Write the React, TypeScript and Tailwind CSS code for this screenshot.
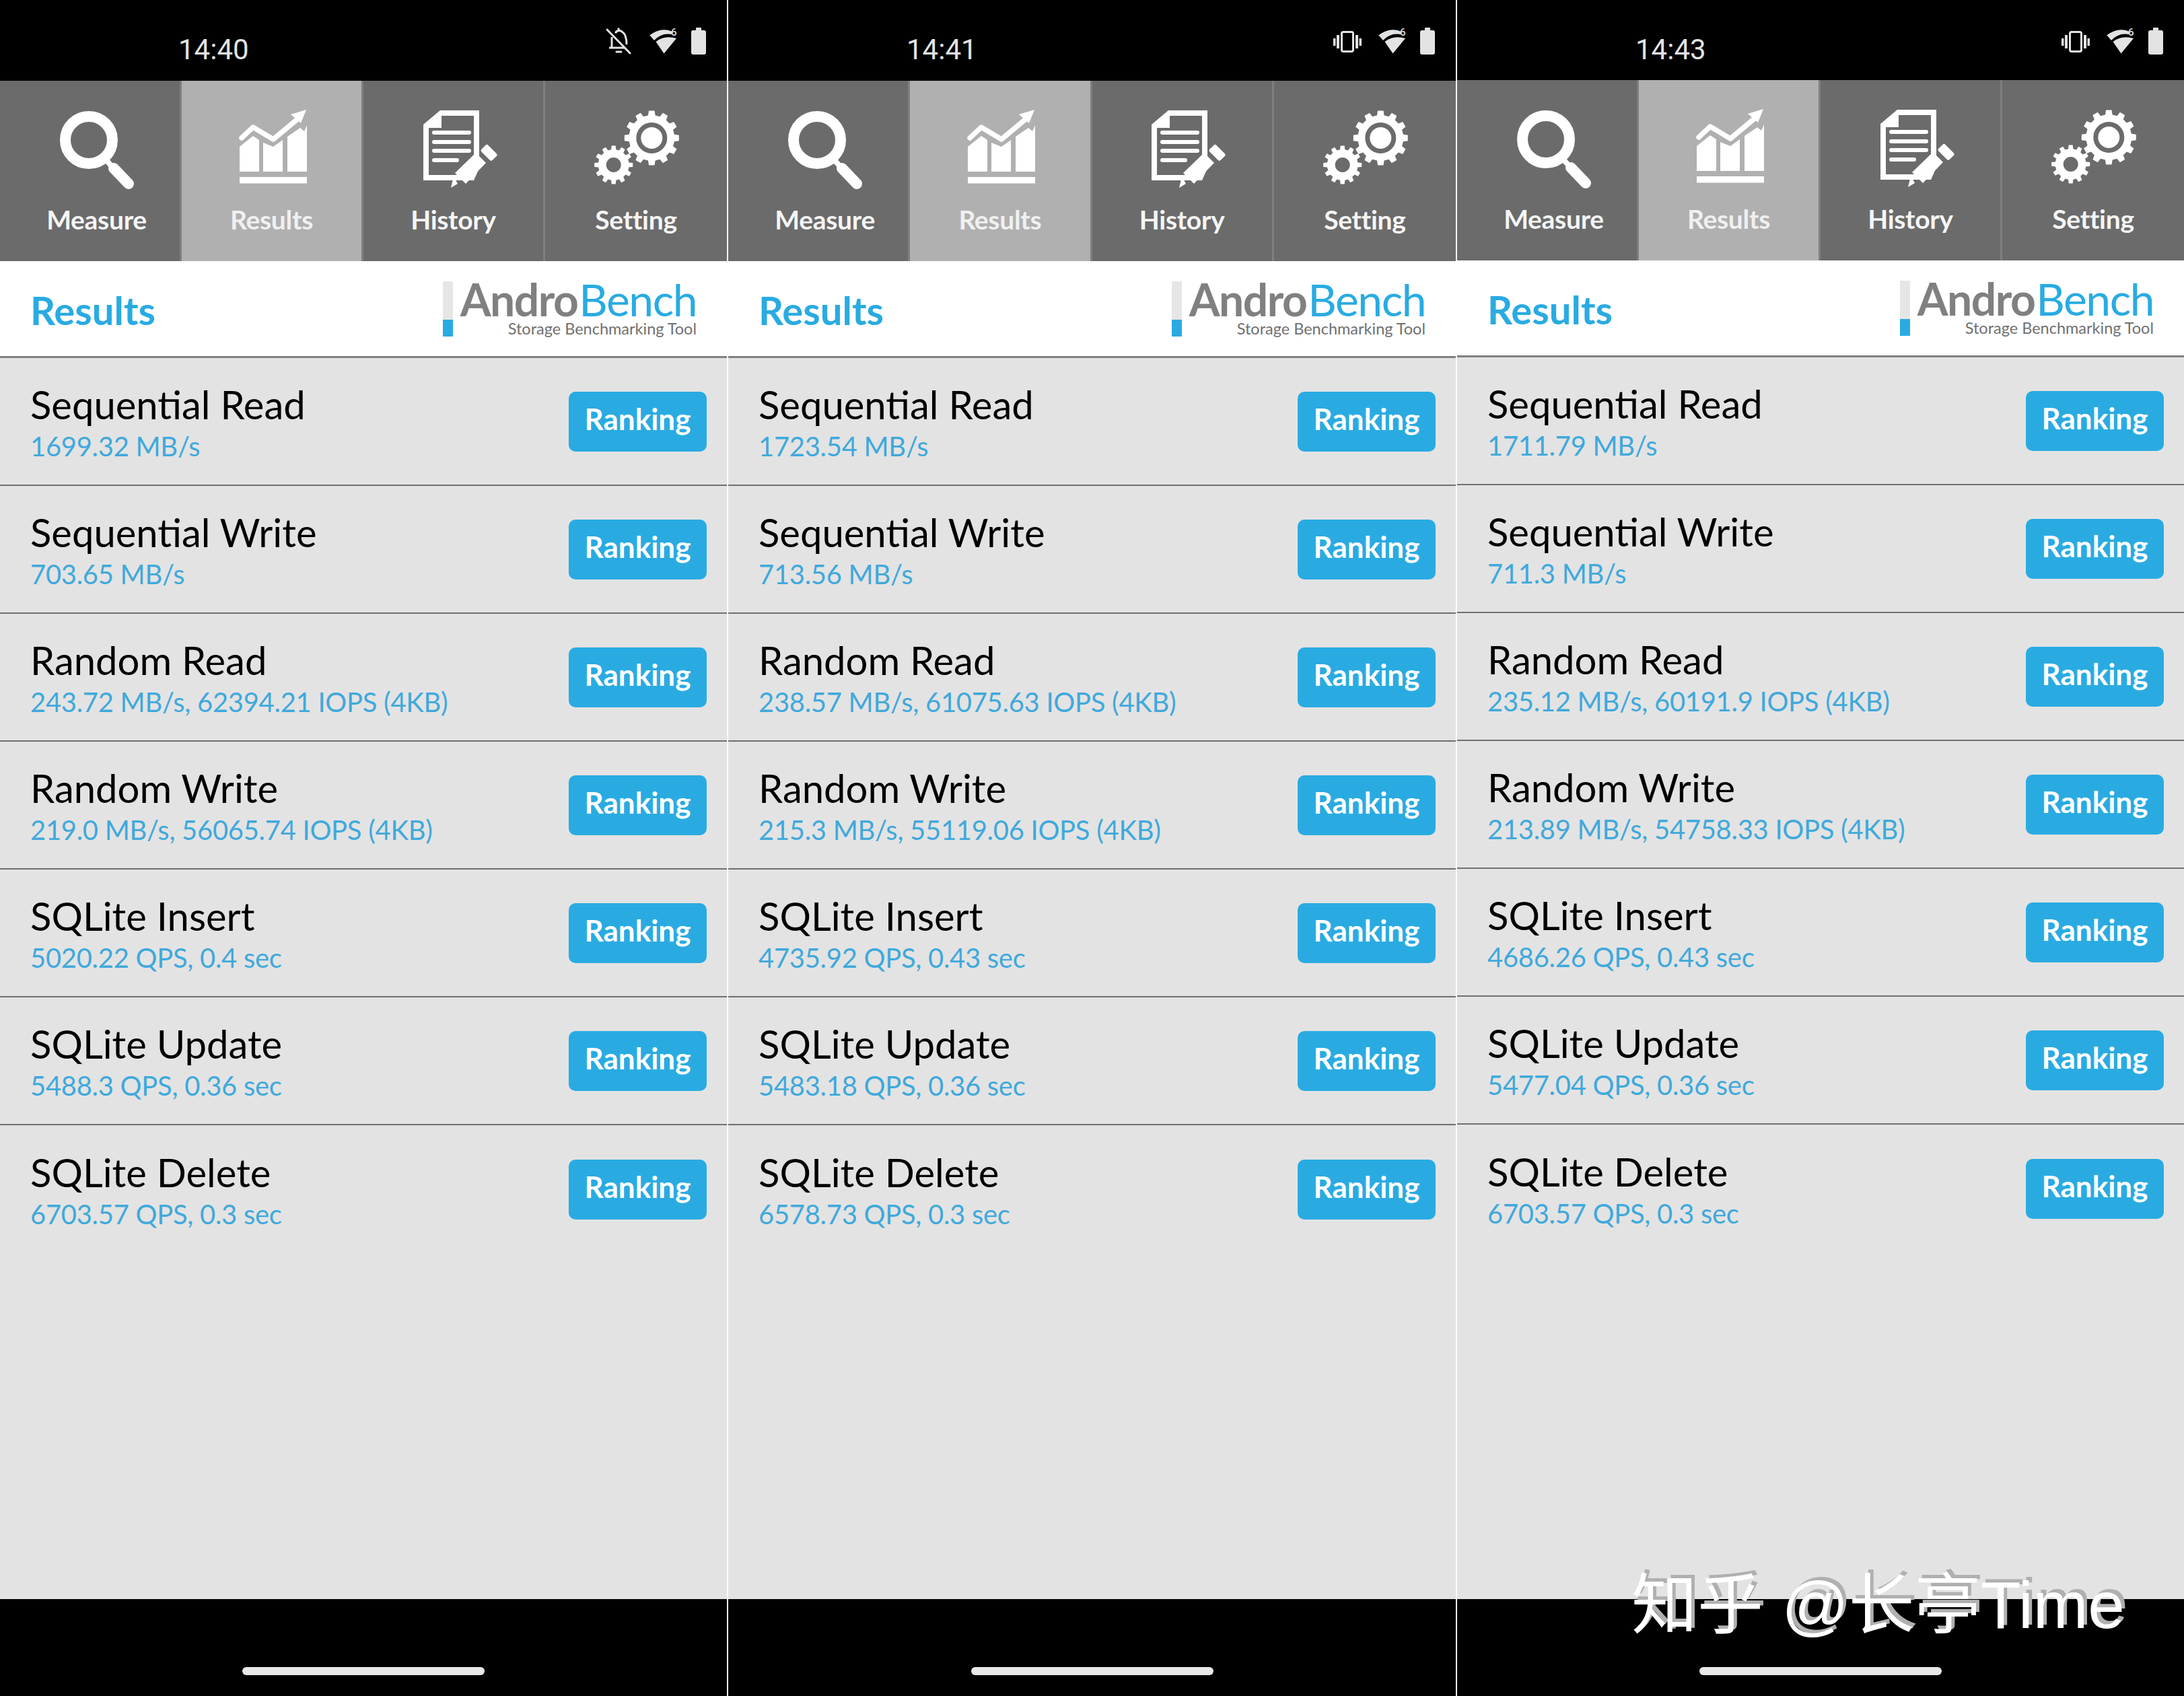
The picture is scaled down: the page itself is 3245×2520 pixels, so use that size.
import React from 'react';

type Row = { name: string; value: string };

type PanelData = {
  time: string;
  silent: boolean;
  values: string[];
};

const rowNames = [
  'Sequential Read',
  'Sequential Write',
  'Random Read',
  'Random Write',
  'SQLite Insert',
  'SQLite Update',
  'SQLite Delete',
];

const panels: PanelData[] = [
  {
    time: '14:40',
    silent: true,
    values: [
      '1699.32 MB/s',
      '703.65 MB/s',
      '243.72 MB/s, 62394.21 IOPS (4KB)',
      '219.0 MB/s, 56065.74 IOPS (4KB)',
      '5020.22 QPS, 0.4 sec',
      '5488.3 QPS, 0.36 sec',
      '6703.57 QPS, 0.3 sec',
    ],
  },
  {
    time: '14:41',
    silent: false,
    values: [
      '1723.54 MB/s',
      '713.56 MB/s',
      '238.57 MB/s, 61075.63 IOPS (4KB)',
      '215.3 MB/s, 55119.06 IOPS (4KB)',
      '4735.92 QPS, 0.43 sec',
      '5483.18 QPS, 0.36 sec',
      '6578.73 QPS, 0.3 sec',
    ],
  },
  {
    time: '14:43',
    silent: false,
    values: [
      '1711.79 MB/s',
      '711.3 MB/s',
      '235.12 MB/s, 60191.9 IOPS (4KB)',
      '213.89 MB/s, 54758.33 IOPS (4KB)',
      '4686.26 QPS, 0.43 sec',
      '5477.04 QPS, 0.36 sec',
      '6703.57 QPS, 0.3 sec',
    ],
  },
];

function gearPath(cx: number, cy: number, rOut: number, rIn: number, teeth: number) {
  const pts: string[] = [];
  const step = (Math.PI * 2) / teeth;
  for (let i = 0; i < teeth; i++) {
    const a = i * step;
    const corners: [number, number][] = [
      [a - step * 0.3, rIn],
      [a - step * 0.2, rOut],
      [a + step * 0.2, rOut],
      [a + step * 0.3, rIn],
    ];
    corners.forEach(([t, r]) => {
      pts.push(`${(cx + r * Math.cos(t)).toFixed(2)} ${(cy + r * Math.sin(t)).toFixed(2)}`);
    });
  }
  return `M${pts.join('L')}Z`;
}

function MeasureIcon() {
  return (
    <svg viewBox="0 0 180 124" className="w-[180px] h-[124px]">
      <circle cx="88" cy="48" r="35" fill="none" stroke="#fff" strokeWidth="16" />
      <path d="M112 76 L122 87" stroke="#fff" strokeWidth="8" />
      <path d="M125 90 L147 113" stroke="#fff" strokeWidth="16" strokeLinecap="round" />
    </svg>
  );
}

function ResultsIcon() {
  return (
    <svg viewBox="0 0 180 124" className="w-[180px] h-[124px]" fill="#fff">
      <rect x="42" y="103" width="100" height="9.5" />
      <path d="M42 58 L62 42 L71 48 V95 H42 Z" />
      <path d="M77 52 L92 58 L106 48 V95 H77 Z" />
      <path d="M113 43 L132 30 L138 35 L142 26 V95 H113 Z" />
      <path d="M45 45 L62 29 L92 47 L128 17" fill="none" stroke="#fff" strokeWidth="7.5" strokeLinecap="round" strokeLinejoin="round" />
      <path d="M141 3 L118 10 L133 23 Z" />
    </svg>
  );
}

function HistoryIcon() {
  return (
    <svg viewBox="0 0 180 124" className="w-[180px] h-[124px]" fill="#fff">
      <path
        fillRule="evenodd"
        d="M45 25 L70 4 H128 V90 L120 108 H45 Z M72 12 H120 V78 L95 100 H53 V30 H72 Z"
      />
      <rect x="58" y="34" width="58" height="6" rx="3" />
      <rect x="58" y="48" width="58" height="6" rx="3" />
      <rect x="58" y="61" width="58" height="6" rx="3" />
      <rect x="58" y="75" width="40" height="6" rx="3" />
      <path d="M92 97 L123 67 L138 82 L108 113 Z" />
      <path d="M86 119 L90 102 L96 113 Z" />
      <rect x="131" y="60" width="23" height="14" rx="3" transform="rotate(45 142.7 67)" />
    </svg>
  );
}

function SettingIcon() {
  return (
    <svg viewBox="0 0 180 124" className="w-[180px] h-[124px]">
      <path d={gearPath(113.3, 45, 40.7, 34, 12)} fill="#fff" />
      <circle cx="113.3" cy="45" r="19.5" fill="none" stroke="#6b6b6b" strokeWidth="7" />
      <path fillRule="evenodd" d={`${gearPath(56.7, 85, 28.7, 23, 12)} M67.7 85 A11 11 0 1 0 45.7 85 A11 11 0 1 0 67.7 85 Z`} fill="#fff" />
    </svg>
  );
}

function BellOffIcon() {
  return (
    <svg viewBox="0 0 42 42" className="w-[42px] h-[42px]" fill="none" stroke="#e3e3e3" strokeWidth="3">
      <path d="M4 4 L38 39" strokeLinecap="round" />
      <path d="M16 9 Q21 3 26 7 Q33 11 33 26" />
      <path d="M11 15 V30 M7 31 H30" />
      <path d="M18 37 H25" strokeLinecap="round" />
      <path d="M21 1.5 V5" />
    </svg>
  );
}

function VibrateIcon() {
  return (
    <svg viewBox="0 0 42 42" className="w-[42px] h-[42px]" fill="#e3e3e3">
      <rect x="12.5" y="7.5" width="17" height="29" rx="2.5" fill="none" stroke="#e3e3e3" strokeWidth="3" />
      <rect x="5" y="12" width="4" height="20" />
      <rect x="0" y="17" width="3.5" height="11" />
      <rect x="33" y="12" width="4" height="20" />
      <rect x="38.5" y="17" width="3.5" height="11" />
    </svg>
  );
}

function WifiIcon() {
  return (
    <svg viewBox="0 0 44 42" className="w-[44px] h-[42px]" fill="#e3e3e3">
      <path d="M2 13 L8 20 Q19 8 34 11 L34 6.5 Q17 0 0.5 13 Z" />
      <path d="M10.5 22 Q23 12 41 17 L22.5 39.5 Z" />
      <text x="33" y="13" fontSize="15" fontFamily="Roboto, sans-serif" fontWeight="500">6</text>
    </svg>
  );
}

function BatteryIcon() {
  return (
    <svg viewBox="0 0 24 42" className="w-[24px] h-[42px]" fill="#e3e3e3">
      <rect x="8" y="1" width="8" height="6" rx="1" />
      <rect x="1" y="5" width="22" height="36" rx="3" />
    </svg>
  );
}

function StatusBar({ time, silent, heightClass }: { time: string; silent: boolean; heightClass: string }) {
  return (
    <div className={`${heightClass} bg-black flex items-center pl-[265px] pr-[30px]`}>
      <span className="text-[42px] leading-none text-[#e3e3e3] font-['Roboto',sans-serif] mt-[28px]">{time}</span>
      <div className="ml-auto flex items-center mt-[2px]">
        {silent ? <BellOffIcon /> : <VibrateIcon />}
        <div className="ml-[24px]">
          <WifiIcon />
        </div>
        <div className="ml-[18px]">
          <BatteryIcon />
        </div>
      </div>
    </div>
  );
}

function NavTab({ label, active, icon, last, labelClass }: { label: string; active?: boolean; icon: React.ReactNode; last?: boolean; labelClass?: string }) {
  return (
    <div
      className={`flex flex-col items-center pt-[40px] ${active ? 'bg-[#b0b0b0] text-[#f0f0f0]' : 'bg-[#6b6b6b] text-[#f5f5f5]'} ${last ? '' : 'border-r-[3px] border-[#7f7f7f]'}`}
    >
      {icon}
      <span className={`text-[39px] leading-[48px] font-bold mt-[18px] tracking-[-0.3px] ${labelClass ?? ''}`}>{label}</span>
    </div>
  );
}

function ResultRow({ name, value, last }: Row & { last: boolean }) {
  return (
    <div className={`h-[190px] shrink-0 flex items-center justify-between pl-[45px] pr-[30px] ${last ? '' : 'border-b-2 border-[#6f6f6f]'}`}>
      <div className="flex flex-col">
        <span className="text-[58px] leading-[72px] text-black">{name}</span>
        <span className="text-[40px] leading-[48px] text-[#3fa9dc] mt-[2px] tracking-[-0.3px]">{value}</span>
      </div>
      <div className="w-[205px] h-[89px] rounded-[10px] bg-[#29abe2] flex items-center justify-center pb-[8px] text-[44px] font-bold text-white">
        Ranking
      </div>
    </div>
  );
}

function Panel({ data, widthClass, statusClass }: { data: PanelData; widthClass: string; statusClass: string }) {
  return (
    <div className={`${widthClass} flex flex-col h-full`}>
      <StatusBar time={data.time} silent={data.silent} heightClass={statusClass} />
      <div className="grid grid-cols-4 h-[268px]">
        <NavTab label="Measure" labelClass="ml-[20px]" icon={<MeasureIcon />} />
        <NavTab label="Results" active icon={<ResultsIcon />} />
        <NavTab label="History" icon={<HistoryIcon />} />
        <NavTab label="Setting" last icon={<SettingIcon />} />
      </div>
      <div className="h-[144px] bg-white border-b-[3px] border-[#808080] flex items-center justify-between pl-[45px] pr-[45px]">
        <span className="text-[58px] font-bold text-[#29abe2] mt-[4px]">Results</span>
        <div className="flex items-stretch h-[82px]">
          <div className="w-[15px] flex flex-col">
            <div className="flex-1 bg-[#e6e6e6]" />
            <div className="h-[25px] bg-[#29abe2]" />
          </div>
          <div className="ml-[11px] flex flex-col items-end -mt-[4px]">
            <div className="text-[66px] leading-[62px] tracking-[-1.5px]">
              <span className="font-bold text-[#808080]">Andro</span>
              <span className="text-[#29abe2] ml-[2px]">Bench</span>
            </div>
            <span className="text-[23.5px] leading-[24px] text-[#707070]">Storage Benchmarking Tool</span>
          </div>
        </div>
      </div>
      <div className="flex-1 bg-[#e3e3e3] flex flex-col">
        {rowNames.map((name, i) => (
          <ResultRow key={name} name={name} value={data.values[i]} last={i === rowNames.length - 1} />
        ))}
      </div>
      <div className="h-[144px] bg-black flex justify-center pt-[101px]">
        <div className="w-[360px] h-[12px] rounded-full bg-[#e8e8e8]" />
      </div>
    </div>
  );
}

export default function App() {
  return (
    <div className="relative w-[3245px] h-[2520px] bg-white flex gap-[2px] overflow-hidden font-['Lato',sans-serif]">
      <Panel data={panels[0]} widthClass="w-[1080px]" statusClass="h-[120px]" />
      <Panel data={panels[1]} widthClass="w-[1081px]" statusClass="h-[120px]" />
      <Panel data={panels[2]} widthClass="flex-1" statusClass="h-[119px]" />
      <div className="absolute left-[2424px] top-[2330px] text-[98px] leading-[110px] text-white whitespace-nowrap [text-shadow:5px_-5px_0_#b0b0b0] font-['Liberation_Sans','Noto_Sans_CJK_SC',sans-serif]">
        知乎 @长亭Time
      </div>
    </div>
  );
}
